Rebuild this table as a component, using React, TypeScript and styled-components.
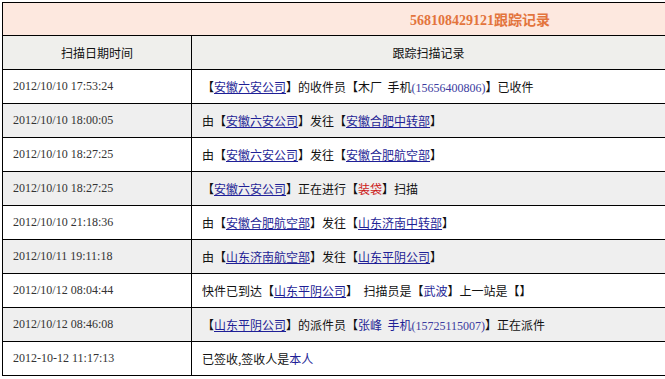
import React from "react";
import styled, { createGlobalStyle } from "styled-components";

type Part = {
    text: string;
    kind?: "link" | "blue" | "red" | "num";
};

type Record = {
    time: string;
    parts: Part[];
};

const records: Record[] = [
    {
        time: "2012/10/10 17:53:24",
        parts: [
            { text: "【" },
            { text: "安徽六安公司", kind: "link" },
            { text: "】的收件员【木厂  手机" },
            { text: "(15656400806)", kind: "num" },
            { text: "】已收件" },
        ],
    },
    {
        time: "2012/10/10 18:00:05",
        parts: [
            { text: "由【" },
            { text: "安徽六安公司", kind: "link" },
            { text: "】发往【" },
            { text: "安徽合肥中转部", kind: "link" },
            { text: "】" },
        ],
    },
    {
        time: "2012/10/10 18:27:25",
        parts: [
            { text: "由【" },
            { text: "安徽六安公司", kind: "link" },
            { text: "】发往【" },
            { text: "安徽合肥航空部", kind: "link" },
            { text: "】" },
        ],
    },
    {
        time: "2012/10/10 18:27:25",
        parts: [
            { text: "【" },
            { text: "安徽六安公司", kind: "link" },
            { text: "】正在进行【" },
            { text: "装袋", kind: "red" },
            { text: "】扫描" },
        ],
    },
    {
        time: "2012/10/10 21:18:36",
        parts: [
            { text: "由【" },
            { text: "安徽合肥航空部", kind: "link" },
            { text: "】发往【" },
            { text: "山东济南中转部", kind: "link" },
            { text: "】" },
        ],
    },
    {
        time: "2012/10/11 19:11:18",
        parts: [
            { text: "由【" },
            { text: "山东济南航空部", kind: "link" },
            { text: "】发往【" },
            { text: "山东平阴公司", kind: "link" },
            { text: "】" },
        ],
    },
    {
        time: "2012/10/12 08:04:44",
        parts: [
            { text: "快件已到达【" },
            { text: "山东平阴公司", kind: "link" },
            { text: "】  扫描员是【" },
            { text: "武波", kind: "blue" },
            { text: "】上一站是【】" },
        ],
    },
    {
        time: "2012/10/12 08:46:08",
        parts: [
            { text: "【" },
            { text: "山东平阴公司", kind: "link" },
            { text: "】的派件员【" },
            { text: "张峰  手机", kind: "blue" },
            { text: "(15725115007)", kind: "num" },
            { text: "】正在派件" },
        ],
    },
    {
        time: "2012-10-12 11:17:13",
        parts: [
            { text: "已签收,签收人是" },
            { text: "本人", kind: "blue" },
        ],
    },
];

const GlobalStyle = createGlobalStyle`
    body {
        margin: 0;
        background: #ffffff;
        overflow: hidden;
    }
`;

const Page = styled.div`
    padding: 2px 0 0 2px;
    overflow: hidden;
`;

const Table = styled.table`
    width: 664px;
    border-collapse: collapse;
    table-layout: fixed;
    font-family: "Noto Sans CJK SC", sans-serif;
    font-size: 12px;
    color: #111111;

    td, th {
        border: 1px solid #000000;
        padding: 0;
        vertical-align: middle;
    }
`;

const TitleCell = styled.td`
    height: 32px;
    background: #fde8df;
    padding-left: 407px !important;
    text-align: left;
    font-family: "Liberation Serif", "Noto Sans CJK SC", serif;
    font-size: 14px;
    font-weight: bold;
    color: #e3743c;
`;

const HeadCell = styled.th`
    height: 33px;
    background: #efefec;
    font-weight: normal;
    text-align: center;
`;

const Row = styled.tr<{ $shaded: boolean }>`
    height: 34px;
    background: ${props => (props.$shaded ? "#efefef" : "#ffffff")};
`;

const TimeCell = styled.td`
    padding-left: 10px !important;
    font-family: "Liberation Serif", serif;
    font-size: 12px;
    color: #333333;
`;

const RecordCell = styled.td`
    padding-left: 10px !important;
    white-space: pre;
`;

const Link = styled.a`
    color: #1f1f96;
    text-decoration: underline;
`;

const Blue = styled.span`
    color: #1f1f96;
`;

const Num = styled.span`
    font-family: "Liberation Serif", serif;
    color: #3b3ba0;
`;

const Red = styled.span`
    color: #cc1a1a;
`;

const renderPart = (p: Part, i: number) => {
    switch (p.kind) {
        case "link":
            return <Link key={i} href="#">{p.text}</Link>;
        case "blue":
            return <Blue key={i}>{p.text}</Blue>;
        case "num":
            return <Num key={i}>{p.text}</Num>;
        case "red":
            return <Red key={i}>{p.text}</Red>;
        default:
            return <React.Fragment key={i}>{p.text}</React.Fragment>;
    }
};

const App: React.FC = () => {
    return (
        <Page>
            <GlobalStyle />
            <Table>
                <colgroup>
                    <col style={{ width: 189 }} />
                    <col />
                </colgroup>
                <tbody>
                    <tr>
                        <TitleCell colSpan={2}>568108429121跟踪记录</TitleCell>
                    </tr>
                    <tr>
                        <HeadCell>扫描日期时间</HeadCell>
                        <HeadCell>跟踪扫描记录</HeadCell>
                    </tr>
                    {records.map((r, i) => (
                        <Row key={i} $shaded={i % 2 === 1}>
                            <TimeCell>{r.time}</TimeCell>
                            <RecordCell>{r.parts.map(renderPart)}</RecordCell>
                        </Row>
                    ))}
                </tbody>
            </Table>
        </Page>
    );
};

export default App;
